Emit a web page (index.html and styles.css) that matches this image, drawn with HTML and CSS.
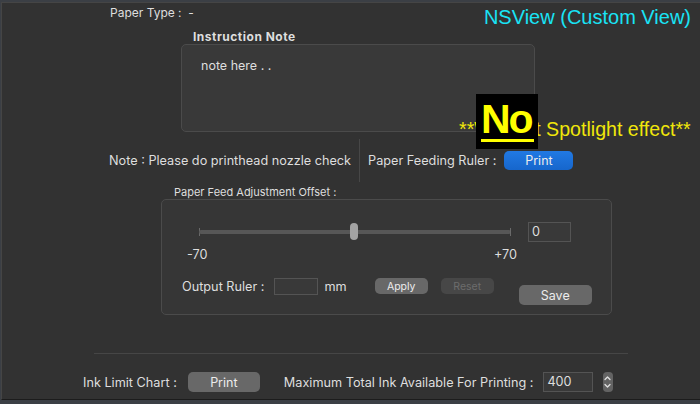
FILE: index.html
```html
<!DOCTYPE html>
<html lang="en">
  <head>
    <meta charset="UTF-8" />
    <title>Paper Feed</title>
    <link rel="stylesheet" href="styles.css">
  </head>
  <body>
    <div class="window">
      <div class="top">
        <div class="paper-type">Paper Type :&nbsp;&nbsp;-</div>
        <div class="custom-view">NSView (Custom View)</div>
      </div>

      <div class="note-block">
        <div class="note-title">Instruction Note</div>
        <div class="note-box">note here . .</div>
      </div>

      <div class="spotlight">**Without Spotlight effect**</div>
      <div class="no-badge"><span>No</span></div>

      <div class="feed-row">
        <div class="check-note">Note : Please do printhead nozzle check</div>
        <div class="vsep"></div>
        <div class="label">Paper Feeding Ruler :</div>
        <button class="btn blue">Print</button>
      </div>

      <div class="offset-title">Paper Feed Adjustment Offset :</div>
      <div class="group">
        <div class="slider-row">
          <div class="slider">
            <div class="tick left"></div>
            <div class="track"></div>
            <div class="tick right"></div>
            <div class="knob"></div>
          </div>
          <div class="field value">0</div>
        </div>
        <div class="range">
          <span>-70</span>
          <span>+70</span>
        </div>
        <div class="output-row">
          <span class="label">Output Ruler :</span>
          <div class="field ruler"></div>
          <span class="label mm">mm</span>
          <button class="btn small">Apply</button>
          <button class="btn small off">Reset</button>
          <button class="btn save">Save</button>
        </div>
      </div>

      <div class="hsep"></div>

      <div class="ink-row">
        <span class="label">Ink Limit Chart :</span>
        <button class="btn ink">Print</button>
        <span class="label">Maximum Total Ink Available For Printing :</span>
        <div class="field total">400</div>
        <div class="stepper">
          <svg width="9" height="20" viewBox="0 0 9 20">
            <path d="M2 7.5 L4.5 5 L7 7.5" fill="none" stroke="#e0e0e0" stroke-width="1.3" stroke-linecap="round" stroke-linejoin="round"/>
            <path d="M2 12.5 L4.5 15 L7 12.5" fill="none" stroke="#e0e0e0" stroke-width="1.3" stroke-linecap="round" stroke-linejoin="round"/>
          </svg>
        </div>
      </div>
    </div>
  </body>
</html>
```

FILE: styles.css
```css
body {
  margin: 0;
  background: #3b3f45;
  font-family: Inter, "Noto Sans", sans-serif;
  color: #dedede;
}

.window {
  position: relative;
  margin: 2px 0 0 1px;
  height: 398px;
  background: #323232;
  border-top: 1px solid #454545;
  border-left: 1px solid #454545;
  border-bottom: 1px solid #1c1c1c;
  box-sizing: border-box;
  font-size: 12px;
}

.top {
  display: flex;
  justify-content: space-between;
  height: 26px;
}

.paper-type {
  padding: 2px 0 0 108px;
}

.custom-view {
  font-family: "Liberation Sans", Arial, sans-serif;
  font-size: 20px;
  color: #19e3f5;
  padding: 3px 9px 0 0;
}

.note-block {
  margin-left: 179px;
}

.note-title {
  font-weight: 700;
  font-size: 12px;
  letter-spacing: 0.5px;
  padding-left: 12px;
  height: 15px;
}

.note-box {
  width: 354px;
  height: 88px;
  border: 1px solid #4b4b4b;
  border-radius: 5px;
  background: #393939;
  padding: 13px 0 0 19px;
  box-sizing: border-box;
  font-size: 12.5px;
}

.spotlight {
  position: absolute;
  left: 457px;
  top: 115px;
  font-family: "Liberation Sans", Arial, sans-serif;
  font-size: 19.6px;
  color: #f0e60a;
}

.no-badge {
  position: absolute;
  left: 474px;
  top: 91px;
  width: 62px;
  height: 55px;
  background: #000;
}

.no-badge span {
  display: block;
  margin: 5px 0 0 5px;
  width: 53px;
  font-family: "Liberation Sans", Arial, sans-serif;
  font-weight: 700;
  font-size: 41px;
  line-height: 40px;
  letter-spacing: -2px;
  color: #ffff00;
  border-bottom: 3px solid #ffff00;
}

.feed-row {
  display: flex;
  align-items: center;
  margin-top: 7px;
  height: 43px;
}

.check-note {
  padding-left: 107px;
  font-size: 12.7px;
}

.vsep {
  width: 1px;
  height: 43px;
  background: #474747;
  margin: 0 8px 0 8px;
}

.label {
  font-size: 12.7px;
}

.btn {
  font-family: Inter, "Noto Sans", sans-serif;
  border: none;
  border-radius: 5px;
  color: #ececec;
  background: #686868;
  padding: 0;
}

.btn.blue {
  margin-left: 8px;
  width: 69px;
  height: 19px;
  font-size: 12.5px;
  background: linear-gradient(#2179e3, #1666cc);
}

.offset-title {
  font-size: 11px;
  margin: 3px 0 0 172px;
  height: 14px;
}

.group {
  margin-left: 159px;
  width: 451px;
  height: 116px;
  border: 1px solid #4b4b4b;
  border-radius: 5px;
  background: #363636;
  box-sizing: border-box;
}

.slider-row {
  display: flex;
  align-items: center;
  height: 24px;
  margin-top: 20px;
}

.slider {
  position: relative;
  margin-left: 37px;
  width: 312px;
  height: 18px;
}

.track {
  position: absolute;
  left: 0;
  right: 0;
  top: 7px;
  height: 4px;
  border-radius: 2px;
  background: #575757;
}

.tick {
  position: absolute;
  top: 5px;
  width: 1px;
  height: 8px;
  background: #6a6a6a;
}

.tick.left {
  left: 0;
}

.tick.right {
  right: 0;
}

.knob {
  position: absolute;
  left: 151px;
  top: 0;
  width: 8px;
  height: 17px;
  border-radius: 4px;
  background: #a3a3a3;
}

.field {
  background: #393939;
  border: 1px solid #545454;
  box-sizing: border-box;
  font-size: 12.7px;
  padding-left: 3px;
}

.field.value {
  margin-left: 17px;
  width: 43px;
  height: 20px;
  line-height: 18px;
}

.range {
  display: flex;
  justify-content: space-between;
  width: 330px;
  margin: 3px 0 0 25px;
  font-size: 12.7px;
}

.output-row {
  display: flex;
  align-items: center;
  margin-top: 5px;
  padding-left: 20px;
}

.field.ruler {
  margin-left: 10px;
  width: 44px;
  height: 17px;
}

.mm {
  margin-left: 6px;
}

.btn.small {
  width: 53px;
  height: 16px;
  font-size: 10.5px;
  margin-left: 28px;
}

.btn.off {
  margin-left: 13px;
  background: #474747;
  color: #6c6c6c;
}

.btn.save {
  width: 73px;
  height: 20px;
  font-size: 12.5px;
  margin: 18px 0 0 25px;
}

.hsep {
  margin: 38px 0 0 92px;
  width: 534px;
  height: 1px;
  background: #464646;
}

.ink-row {
  display: flex;
  align-items: center;
  margin-top: 18px;
  padding-left: 81px;
}

.btn.ink {
  width: 72px;
  height: 20px;
  font-size: 12.5px;
  margin: 0 24px 0 11px;
}

.field.total {
  margin-left: 10px;
  width: 50px;
  height: 20px;
  line-height: 18px;
}

.stepper {
  margin-left: 10px;
  width: 10px;
  height: 20px;
  border-radius: 4px;
  background: #636363;
}
```
